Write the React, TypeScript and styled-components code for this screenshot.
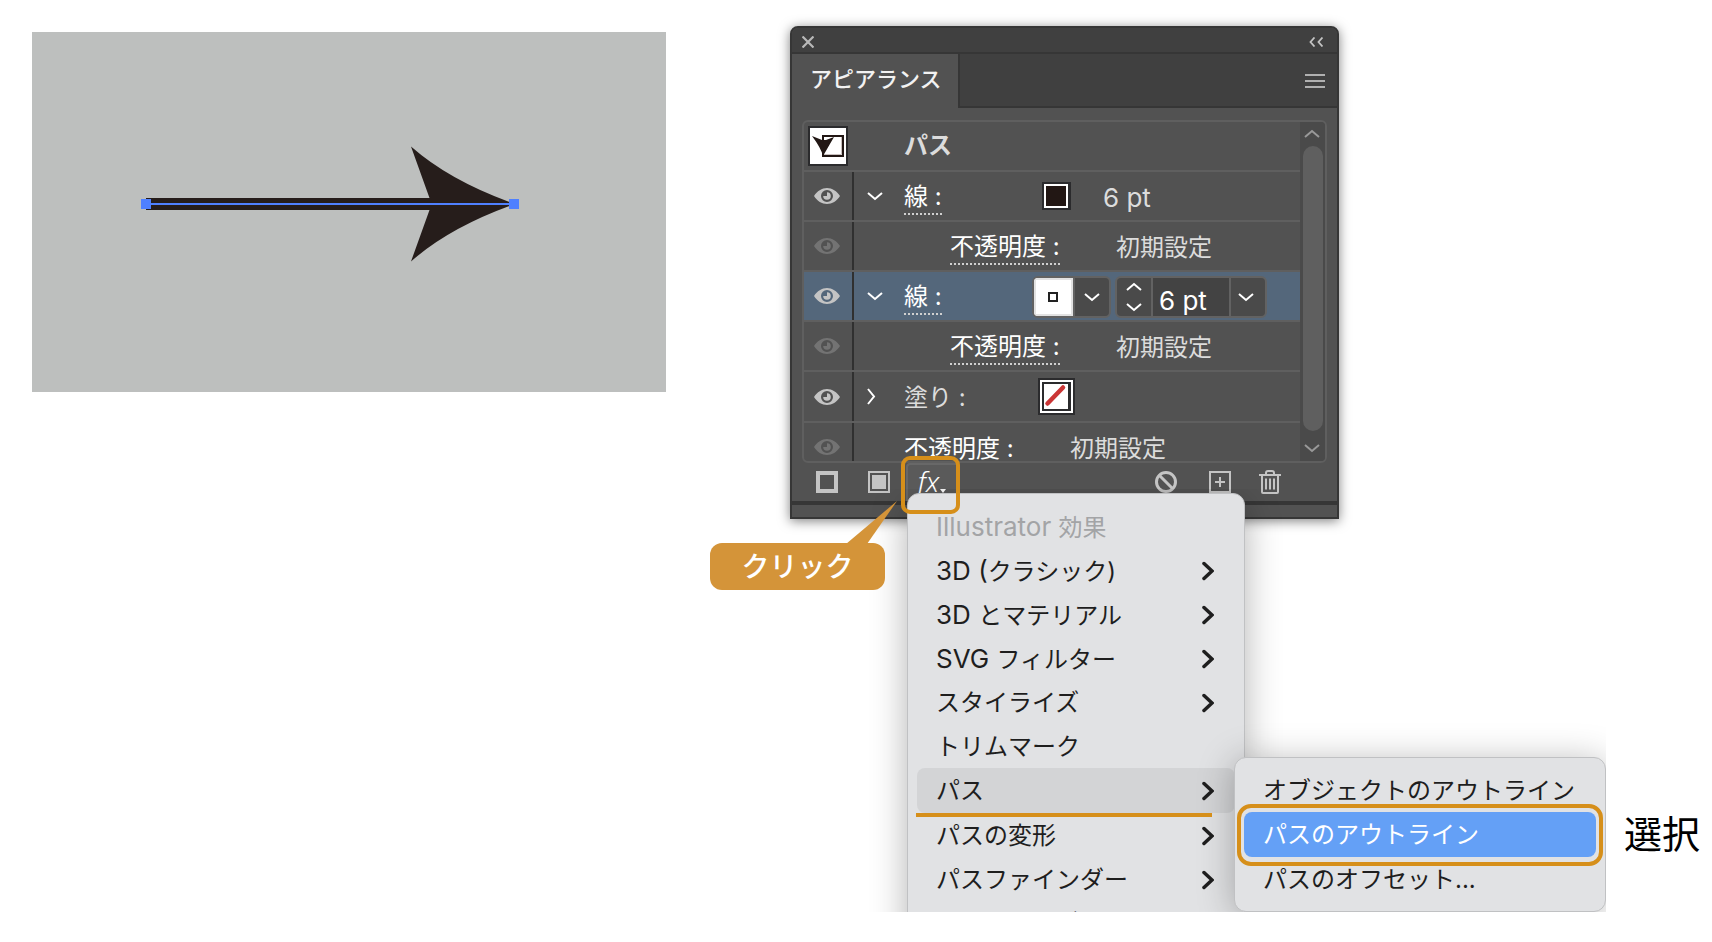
import React from "react";
import styled, { createGlobalStyle, css } from "styled-components";

const orange = "#d68f1a";

const Global = createGlobalStyle`
  *, *::before, *::after { box-sizing: border-box; }
  body {
    margin: 0;
    background: #fff;
    font-family: Inter, "Noto Sans CJK JP", sans-serif;
    font-size: 24px;
    line-height: 36px;
  }
  button, input { font: inherit; color: inherit; }
  ul { list-style: none; margin: 0; padding: 0; }
  svg { display: block; flex: none; }
`;

/* page */

const Page = styled.main`
  display: flex;
  align-items: flex-start;
  gap: 124px;
  min-height: 100vh;
  padding: 26px 373px 26px 32px;
`;

const Artboard = styled.figure`
  flex: 1;
  min-width: 0;
  margin: 6px 0 0;
  background: #bdbfbe;
  svg { width: 100%; height: auto; }
`;

/* panel */

const Panel = styled.section`
  flex: none;
  width: 549px;
  border: 2px solid #363636;
  border-radius: 8px 8px 0 0;
  background: #525252;
  color: #dcdcdc;
  box-shadow: 0 2px 12px rgba(0, 0, 0, 0.5);
`;

const PlainButton = styled.button`
  display: flex;
  align-items: center;
  justify-content: center;
  padding: 0;
  border: 0;
  background: none;
  cursor: pointer;
`;

const TitleBar = styled.header`
  display: flex;
  align-items: center;
  justify-content: space-between;
  height: 26px;
  padding: 3px 14px 0 10px;
  border-bottom: 2px solid #363636;
  border-radius: 6px 6px 0 0;
  background: #404040;
`;

const TabBar = styled.div`
  display: flex;
  height: 54px;
`;

const Tab = styled.h1`
  width: 166px;
  margin: 0;
  padding: 7px 0 0 18px;
  color: #f2f2f2;
  font-size: 22px;
  font-weight: 500;
  line-height: 36px;
`;

const TabRest = styled.div`
  display: flex;
  flex: 1;
  align-items: center;
  justify-content: flex-end;
  padding: 2px 12px 0 0;
  border-left: 2px solid #363636;
  border-bottom: 2px solid #363636;
  background: #404040;
`;

const ListBox = styled.div`
  display: flex;
  height: 343px;
  margin: 12px 10px 0;
  border: 2px solid #5f5f5f;
  border-radius: 6px;
  overflow: hidden;
`;

const Rows = styled.ul`
  flex: 1;
  overflow: hidden;
`;

const Row = styled.li<{ $selected?: boolean; $tall?: boolean }>`
  display: flex;
  height: ${(p) => (p.$tall ? "51px" : "50px")};
  border-bottom: 2px solid #5f5f5f;
  background: ${(p) => (p.$selected ? "#54677b" : "transparent")};
`;

const EyeCell = styled(PlainButton)<{ $dim?: boolean }>`
  width: 50px;
  padding-right: 2px;
  border-right: 2px solid #303030;
  color: ${(p) => (p.$dim ? "#737373" : "#c4c4c4")};
`;

const ArrowCell = styled(PlainButton)<{ $closed?: boolean }>`
  width: 42px;
  padding-right: ${(p) => (p.$closed ? "8px" : "0")};
  color: #fff;
`;

const ThumbCell = styled.div`
  width: 100px;
  padding: 4px;
`;

const NameCell = styled.div<{ $indent?: boolean; $wide?: boolean; $plain?: boolean }>`
  display: flex;
  align-items: center;
  width: ${(p) => (p.$indent || p.$wide ? "166px" : "128px")};
  margin-left: ${(p) => (p.$indent ? "96px" : p.$wide ? "50px" : "8px")};
  padding-top: 3px;
  color: ${(p) => (p.$plain ? "#dcdcdc" : "#fff")};
`;

const DottedLink = styled.a`
  border-bottom: 2px dotted #d0d0d0;
  color: inherit;
  line-height: 32px;
  text-decoration: none;
  white-space: pre;
`;

const Name = styled.span<{ $bold?: boolean }>`
  font-weight: ${(p) => (p.$bold ? 700 : 400)};
  line-height: 48px;
  white-space: pre;
`;

const Value = styled.span`
  align-self: center;
  padding-top: 3px;
  white-space: pre;
`;

const SwatchCell = styled.div`
  display: flex;
  align-items: center;
  justify-content: center;
  width: 49px;
  margin-right: 22px;
`;

const WeightValue = styled(Value)`
  font-size: 26px;
`;

const Field = styled.div`
  display: flex;
  gap: 2px;
  height: 42px;
  margin: 4px 4px 0 0;
  border: 2px solid #626262;
  border-radius: 6px;
  background: #626262;
  overflow: hidden;
`;

const FieldButton = styled(PlainButton)<{ $end?: boolean }>`
  flex-direction: column;
  gap: 12px;
  width: 34px;
  padding-right: ${(p) => (p.$end ? "4px" : "0")};
  background: #4a4a4a;
  color: #fff;
`;

const ColorButton = styled(PlainButton)`
  width: 39px;
  padding-right: 1px;
  border: 2px solid #e2e2e2;
  background: #fff;
`;

const WeightInput = styled.input`
  width: 76px;
  padding: 8px 0 0 6px;
  border: 0;
  background: #434343;
  color: #fff;
  font-size: 26px;
`;

const ScrollTrack = styled.div`
  display: flex;
  flex-direction: column;
  align-items: center;
  width: 25px;
  background: #4a4a4a;
  color: #999;
`;

const ScrollButton = styled(PlainButton)`
  width: 24px;
  height: 24px;
  padding: 0 2px 2px 0;
`;

const ScrollThumb = styled.div`
  flex: 1;
  width: 20px;
  margin-bottom: 6px;
  border-radius: 10px;
  background: #5f5f5f;
`;

const ToolBar = styled.div`
  display: flex;
  align-items: center;
  height: 38px;
  padding: 0 56px 0 24px;
  color: #c4c4c4;
`;

const ToolButton = styled(PlainButton)<{ $gap?: number; $push?: boolean }>`
  margin-left: ${(p) => (p.$push ? "auto" : `${p.$gap ?? 0}px`)};
`;

const BottomStrip = styled.div`
  height: 16px;
  border-top: 4px solid #363636;
`;

/* effect button with everything attached to it */

const FxArea = styled.div`
  position: relative;
  width: 50px;
  height: 38px;
  margin-left: 16px;
`;

const FxButton = styled(PlainButton)`
  gap: 1px;
  width: 100%;
  height: 100%;
  padding: 0 0 4px;
  border: 2px solid #686868;
  border-right: 0;
  border-bottom: 0;
  border-radius: 4px 0 0 0;
  background: #5a5a5a;
  color: #fff;
  font-family: "Noto Sans", sans-serif;
  font-size: 28px;
  font-style: italic;
  font-weight: 300;
  svg { align-self: flex-end; margin-bottom: 4px; }
`;

const FxFrame = styled.div`
  position: absolute;
  top: -7px;
  left: -5px;
  width: 59px;
  height: 58px;
  border: 4px solid ${orange};
  border-radius: 9px;
  pointer-events: none;
`;

const Callout = styled.div`
  position: absolute;
  top: 80px;
  left: -196px;
  width: 175px;
  padding-top: 1px;
  border-radius: 12px;
  background: #d49439;
  color: #fff;
  font-size: 28px;
  font-weight: 500;
  line-height: 46px;
  text-align: center;
`;

const CalloutTail = styled.svg`
  position: absolute;
  top: -42px;
  left: 136px;
`;

/* menus */

const menuSurface = css`
  padding: 10px 9px;
  border: 1px solid #c0c1c3;
  border-radius: 12px;
  background: #e1e2e4;
  color: #1e1e1e;
`;

const MenuAnchor = styled.div`
  position: absolute;
  top: 30px;
  left: 1px;
`;

const MenuClip = styled.div`
  width: 338px;
  height: 419px;
  clip-path: inset(-4px -361px 0 -60px);
`;

const Menu = styled.ul`
  ${menuSurface}
  box-shadow: 0 10px 36px rgba(0, 0, 0, 0.3);
`;

const SubMenu = styled.ul`
  ${menuSurface}
  position: absolute;
  top: 264px;
  left: 327px;
  width: 372px;
  box-shadow: 0 4px 36px rgba(0, 0, 0, 0.28);
`;

const MenuHeading = styled.li`
  height: 44px;
  padding: 0 19px;
  color: #a3a4a6;
  line-height: 46px;
`;

const MenuItem = styled.li<{ $state?: "open" | "active" }>`
  position: relative;
  border-radius: 8px;
  background: ${(p) =>
    p.$state === "open" ? "#d3d4d6" : p.$state === "active" ? "#64a0f6" : "transparent"};
  color: ${(p) => (p.$state === "active" ? "#fff" : "inherit")};
  padding-bottom: ${(p) => (p.$state ? "1px" : "0")};
`;

const MenuButton = styled(PlainButton)`
  justify-content: space-between;
  width: 100%;
  height: 44px;
  padding: 2px 21px 0 19px;
  white-space: pre;
`;

const Latin = styled.span`
  font-size: 26px;
`;

const Underline = styled.div`
  position: absolute;
  z-index: 1;
  top: 45px;
  left: -1px;
  width: 296px;
  height: 4px;
  background: ${orange};
`;

const ActiveFrame = styled.div`
  position: absolute;
  inset: -8px -7px -9px;
  border: 4px solid ${orange};
  border-radius: 14px;
  pointer-events: none;
`;

const SideLabel = styled.p`
  position: absolute;
  top: 313px;
  left: 717px;
  margin: 0;
  color: #000;
  font-size: 38px;
  line-height: 56px;
  white-space: nowrap;
`;

/* icons */

const Eye = () => (
  <svg width="26" height="16" viewBox="0 0 26 16" fill="currentColor">
    <path
      fillRule="evenodd"
      d="M0 8C3 3 8 0 13 0s10 3 13 8c-3 5-8 8-13 8S3 13 0 8ZM13 2a6 6 0 1 0 0 12a6 6 0 0 0 0-12Z"
    />
    <path d="M13 4.200V8H9.200A3.800 3.800 0 1 0 13 4.200Z" />
  </svg>
);

const Chevron = ({ up }: { up?: boolean }) => (
  <svg width="16" height="9" viewBox="0 0 16 9" fill="none" stroke="currentColor" strokeWidth="2">
    <path d={up ? "M1 8 8 2l7 6" : "M1 1l7 6 7-6"} />
  </svg>
);

const ChevronRight = () => (
  <svg width="9" height="18" viewBox="0 0 9 18" fill="none" stroke="currentColor" strokeWidth="2">
    <path d="M1 1l6 7.500L1 16" />
  </svg>
);

const MenuArrow = () => (
  <svg width="12" height="20" viewBox="0 0 12 20" fill="none" stroke="currentColor" strokeWidth="3.500" strokeLinecap="round">
    <path d="M2 2.500 10 10l-8 7.500" />
  </svg>
);

const PathThumb = () => (
  <svg width="40" height="40" viewBox="0 0 40 40">
    <rect x="1" y="1" width="38" height="38" fill="#fff" stroke="#2b2b2d" strokeWidth="2" />
    <rect x="15" y="10" width="20" height="20" fill="#fff" stroke="#221714" strokeWidth="2" />
    <path d="M16 28.500H33.500V11" fill="none" stroke="#c9c0be" />
    <path d="M4 10l10 4h4l8-3-11 19q-2-8-11-20Z" fill="#221714" />
  </svg>
);

const BlackSwatch = () => (
  <svg width="29" height="28" viewBox="0 0 29 28">
    <rect width="29" height="28" fill="#2b2b2d" />
    <rect x="2" y="2" width="24" height="24" fill="#fff" />
    <rect x="4" y="4" width="20" height="20" fill="#221714" />
  </svg>
);

const NoneSwatch = () => (
  <svg width="37" height="37" viewBox="0 0 37 37">
    <rect width="37" height="37" fill="#2b2b2d" />
    <rect x="2" y="2" width="33" height="33" fill="#fff" />
    <rect x="4" y="4" width="29" height="29" fill="#2b2b2d" />
    <rect x="6" y="6" width="24" height="25" fill="#fff" />
    <path d="M9.500 25.500 25 9.500" stroke="#cb3535" strokeWidth="4.500" strokeLinecap="round" />
  </svg>
);

const OpacityRow = () => (
  <Row>
    <EyeCell $dim aria-label="表示切り替え"><Eye /></EyeCell>
    <NameCell $indent><DottedLink href="#opacity">不透明度 :</DottedLink></NameCell>
    <Value>初期設定</Value>
  </Row>
);

type Effect = { latin?: string; name: string; leaf?: boolean };

const effects: Effect[] = [
  { latin: "3D (", name: "クラシック)" },
  { latin: "3D ", name: "とマテリアル" },
  { latin: "SVG ", name: "フィルター" },
  { name: "スタイライズ" },
  { name: "トリムマーク", leaf: true },
  { name: "パス" },
  { name: "パスの変形" },
  { name: "パスファインダー" },
  { name: "ラスタライズ...", leaf: true },
];
const pathEffects = ["オブジェクトのアウトライン", "パスのアウトライン", "パスのオフセット..."];

const EffectMenu = () => (
  <MenuAnchor>
    <MenuClip>
      <Menu>
        <MenuHeading><Latin>Illustrator </Latin>効果</MenuHeading>
        {effects.map(({ latin, name, leaf }) => (
          <MenuItem key={name} $state={name === "パス" ? "open" : undefined}>
            <MenuButton>
              <span>{latin && <Latin>{latin}</Latin>}{name}</span>
              {!leaf && <MenuArrow />}
            </MenuButton>
            {name === "パス" && <Underline />}
          </MenuItem>
        ))}
      </Menu>
      <SubMenu>
        {pathEffects.map((name, i) => (
          <MenuItem key={name} $state={i === 1 ? "active" : undefined}>
            <MenuButton>{name}</MenuButton>
            {i === 1 && <ActiveFrame />}
          </MenuItem>
        ))}
      </SubMenu>
    </MenuClip>
    <SideLabel>選択</SideLabel>
  </MenuAnchor>
);

export default function App() {
  return (
    <>
      <Global />
      <Page>
        <Artboard>
          <svg viewBox="0 0 634 360" role="img" aria-label="矢印">
            <path
              d="M114 166H397.500L379 114.500Q418 149 483 172Q418 195 379 229.500L397.500 178H114Z"
              fill="#261d1b"
            />
            <path d="M114 172H482" stroke="#4f80ff" strokeWidth="2" />
            <path d="M109 167h10v10h-10ZM477 167h10v10h-10Z" fill="#4f80ff" />
          </svg>
        </Artboard>

        <Panel>
          <TitleBar>
            <PlainButton aria-label="閉じる">
              <svg width="12" height="12" viewBox="0 0 12 12" stroke="#b8b8b8" strokeWidth="2.200">
                <path d="M.5.5l11 11M11.500.5l-11 11" />
              </svg>
            </PlainButton>
            <PlainButton aria-label="折りたたむ">
              <svg width="14" height="10" viewBox="0 0 14 10" fill="none" stroke="#c4c4c4" strokeWidth="1.800">
                <path d="M5.500.5 1.500 5l4 4.500M13.500.5l-4 4.500 4 4.500" />
              </svg>
            </PlainButton>
          </TitleBar>
          <TabBar>
            <Tab>アピアランス</Tab>
            <TabRest>
              <PlainButton aria-label="パネルメニュー">
                <svg width="20" height="14" viewBox="0 0 20 14" stroke="#b0b0b0" strokeWidth="2">
                  <path d="M0 1h20M0 7h20M0 13h20" />
                </svg>
              </PlainButton>
            </TabRest>
          </TabBar>

          <ListBox>
            <Rows>
              <Row>
                <ThumbCell><PathThumb /></ThumbCell>
                <Name $bold>パス</Name>
              </Row>
              <Row>
                <EyeCell aria-label="表示切り替え"><Eye /></EyeCell>
                <ArrowCell aria-label="閉じる"><Chevron /></ArrowCell>
                <NameCell><DottedLink href="#stroke">線 :</DottedLink></NameCell>
                <SwatchCell><BlackSwatch /></SwatchCell>
                <WeightValue>6 pt</WeightValue>
              </Row>
              <OpacityRow />
              <Row $selected>
                <EyeCell aria-label="表示切り替え"><Eye /></EyeCell>
                <ArrowCell aria-label="閉じる"><Chevron /></ArrowCell>
                <NameCell><DottedLink href="#stroke">線 :</DottedLink></NameCell>
                <Field>
                  <ColorButton aria-label="線のカラー">
                    <svg width="10" height="10" viewBox="0 0 10 10" fill="none" stroke="#222" strokeWidth="2">
                      <rect x="1" y="1" width="8" height="8" />
                    </svg>
                  </ColorButton>
                  <FieldButton aria-label="カラーを選ぶ"><Chevron /></FieldButton>
                </Field>
                <Field>
                  <FieldButton aria-label="線幅を増減"><Chevron up /><Chevron /></FieldButton>
                  <WeightInput aria-label="線幅" defaultValue="6 pt" />
                  <FieldButton $end aria-label="線幅を選ぶ"><Chevron /></FieldButton>
                </Field>
              </Row>
              <OpacityRow />
              <Row $tall>
                <EyeCell aria-label="表示切り替え"><Eye /></EyeCell>
                <ArrowCell $closed aria-label="開く"><ChevronRight /></ArrowCell>
                <NameCell $plain><Name>塗り :</Name></NameCell>
                <SwatchCell><NoneSwatch /></SwatchCell>
              </Row>
              <Row>
                <EyeCell $dim aria-label="表示切り替え"><Eye /></EyeCell>
                <NameCell $wide><Name>不透明度 :</Name></NameCell>
                <Value>初期設定</Value>
              </Row>
            </Rows>
            <ScrollTrack>
              <ScrollButton aria-label="上へスクロール"><Chevron up /></ScrollButton>
              <ScrollThumb />
              <ScrollButton aria-label="下へスクロール"><Chevron /></ScrollButton>
            </ScrollTrack>
          </ListBox>

          <ToolBar>
            <ToolButton aria-label="新規線を追加">
              <svg width="22" height="22" viewBox="0 0 22 22" fill="none" stroke="currentColor" strokeWidth="4">
                <rect x="2" y="2" width="18" height="18" />
              </svg>
            </ToolButton>
            <ToolButton $gap={30} aria-label="新規塗りを追加">
              <svg width="22" height="22" viewBox="0 0 22 22">
                <rect x="1" y="1" width="20" height="20" fill="none" stroke="currentColor" strokeWidth="2" />
                <rect x="4" y="4" width="14" height="14" fill="currentColor" />
              </svg>
            </ToolButton>
            <FxArea>
              <FxButton aria-label="新規効果を追加">
                fx
                <svg width="6" height="4" viewBox="0 0 6 4" fill="currentColor"><path d="M0 0h6L3 4Z" /></svg>
              </FxButton>
              <EffectMenu />
              <Callout>
                クリック
                <CalloutTail width="51" height="44" viewBox="0 0 51 44" fill="#d49439">
                  <path d="M0 43 51 0 21 43Z" />
                </CalloutTail>
              </Callout>
              <FxFrame />
            </FxArea>
            <ToolButton $push aria-label="アピアランスを消去">
              <svg width="22" height="22" viewBox="0 0 22 22" fill="none" stroke="currentColor" strokeWidth="3">
                <circle cx="11" cy="11" r="9.500" />
                <path d="M4.500 4.500l13 13" />
              </svg>
            </ToolButton>
            <ToolButton $gap={32} aria-label="選択した項目を複製">
              <svg width="22" height="22" viewBox="0 0 22 22" fill="none" stroke="currentColor" strokeWidth="2">
                <rect x="1" y="1" width="20" height="20" />
                <path d="M11 6v10M6 11h10" />
              </svg>
            </ToolButton>
            <ToolButton $gap={28} aria-label="選択した項目を削除">
              <svg width="22" height="24" viewBox="0 0 22 24" fill="none" stroke="currentColor" strokeWidth="2">
                <path d="M0 5h22M3 5v17a1 1 0 0 0 1 1h14a1 1 0 0 0 1-1V5M7 5V3q0-2 2-2h4q2 0 2 2v2M7 8.500v11M11 8.500v11M15 8.500v11" />
              </svg>
            </ToolButton>
          </ToolBar>
          <BottomStrip />
        </Panel>
      </Page>
    </>
  );
}
